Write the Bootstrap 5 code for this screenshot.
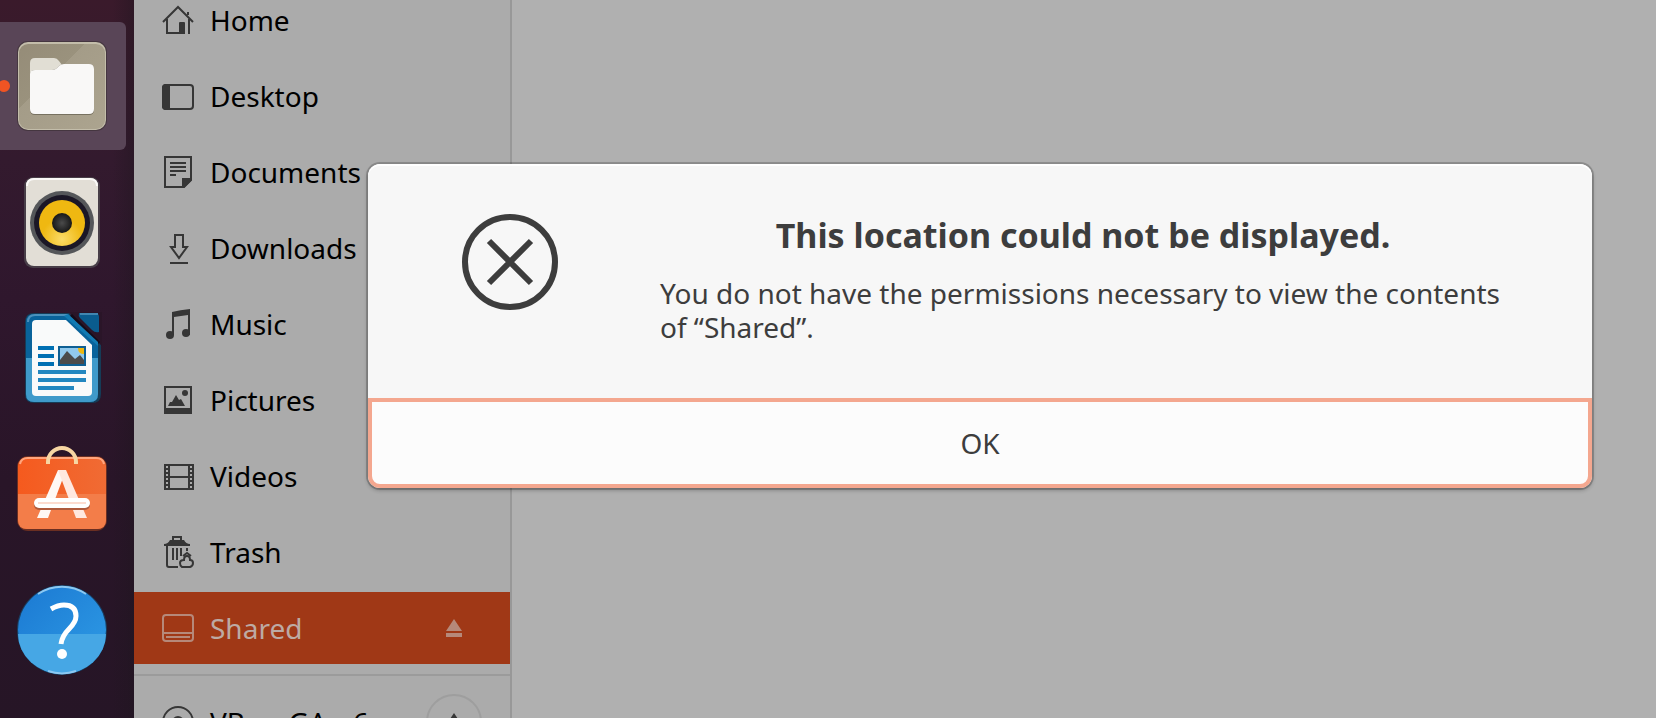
<!DOCTYPE html>
<html lang="en">
<head>
<meta charset="utf-8">
<meta name="viewport" content="width=device-width, initial-scale=1">
<title>Files</title>
<link href="https://cdn.jsdelivr.net/npm/bootstrap@5.3.0/dist/css/bootstrap.min.css" rel="stylesheet">
<style>
body { font-family: "Noto Sans", sans-serif; font-size: 28px; line-height: 34px; background: #b0b0b0; color: #000; }
.dock { width: 134px; padding: 22px 8px 0 0; background: linear-gradient(90deg, transparent 84%, rgba(30,22,30,.4)), linear-gradient(#3a1a2b 0, #331a2e 160px, #2f172d 300px, #291528 480px, #261526 100%); }
.dock-item { height: 128px; padding: 0 2px 0 0; border: 0; border-radius: 0 6px 6px 0; background: transparent; }
.dock-item.running { background: #594557; }
.running-dot { left: -2px; top: 58px; width: 12px; height: 12px; background: #f05423; }
.places { width: 378px; background: #ababab; border-right: 2px solid #989898; }
.place-list { margin-top: -16px; }
.place { height: 72px; padding: 0 28px; color: #000; }
.place svg { color: #363636; }
.place.current { background: #a03816; color: #bdaaa4; }
.place.current svg { color: #b6897a; }
.divider { height: 2px; margin: 6px 0; background: #9b9b9b; }
.eject { width: 56px; height: 56px; padding: 0; border: 0; background: transparent; }
.eject.ring { border: 2px solid #9e9e9e; }
.alert-window { left: 368px; right: 64px; top: 164px; background: #f7f7f7; border-radius: 12px; color: #3d3d3d; box-shadow: 0 0 0 2px rgba(0,0,0,.18), 0 2px 4px rgba(0,0,0,.3), inset 0 2px #fff; }
.alert-content { min-height: 234px; padding: 50px 86px 0 94px; gap: 102px; }
.alert-title { font-size: 34px; line-height: 42px; margin-bottom: 20px; }
.ok-button { height: 90px; background: #fcfcfc; border: 4px solid #f4a78f; border-radius: 0 0 12px 12px; color: #3d3d3d; }
</style>
</head>
<body class="overflow-hidden">
<div class="d-flex vh-100 position-relative overflow-hidden">
<nav class="dock d-flex flex-column gap-2 flex-shrink-0" aria-label="Dock">
<button class="dock-item running position-relative flex-shrink-0" aria-label="Files"><span class="running-dot position-absolute rounded-circle"></span>
<svg class="d-block mx-auto" width="96" height="96" viewBox="0 0 96 96"><defs><linearGradient id="fb" x2="1" y2="1"><stop stop-color="#958c78"/><stop offset=".38" stop-color="#9a927d"/><stop offset=".38" stop-color="#a49c88"/><stop offset="1" stop-color="#aca48f"/></linearGradient></defs><rect x="3" y="3" width="90" height="90" rx="11" fill="#3d3036" opacity=".7"/><rect x="4" y="4" width="88" height="88" rx="10" fill="#c3bdaa"/><rect x="5" y="6" width="86" height="85" rx="9" fill="url(#fb)"/><path d="M16 32v-7q0-5 5-5h19q3 0 5 3l3 4v5L40 35H16z" fill="#e1ded4"/><path d="M16 37q0-5 5-5h17q3 0 5-2l2-2q2-2 5-2h25q5 0 5 5v41q0 5-5 5H21q-5 0-5-5z" fill="#777160"/><path d="M16 36q0-4 5-4h17q3 0 5-2l2-2q2-2 5-2h25q5 0 5 5v40q0 5-5 5H21q-5 0-5-5z" fill="#f9f8f7"/></svg></button>
<button class="dock-item flex-shrink-0" aria-label="Rhythmbox">
<svg class="d-block mx-auto" width="96" height="96" viewBox="0 0 96 96"><defs><radialGradient id="cone" cy=".85"><stop stop-color="#fbdb67"/><stop offset=".9" stop-color="#efb811"/></radialGradient><radialGradient id="cap"><stop stop-color="#4b4b4b"/><stop offset="1" stop-color="#171717"/></radialGradient></defs><rect x="10" y="3" width="76" height="91" rx="9" fill="#483e48"/><rect x="12" y="4" width="72" height="88" rx="8" fill="#e2ded6"/><path d="M13 12q0-7 7-7h56q7 0 7 7" stroke="#faf9f7" stroke-width="2" fill="none"/><circle cx="48" cy="49" r="32" fill="#55575a"/><circle cx="48" cy="49" r="28" fill="#1b1726"/><circle cx="48" cy="49" r="23" fill="url(#cone)"/><circle cx="48" cy="49" r="10" fill="url(#cap)"/></svg></button>
<button class="dock-item flex-shrink-0" aria-label="LibreOffice Writer">
<svg class="d-block mx-auto" width="96" height="96" viewBox="0 0 96 96"><path d="M11 12q0-9 9-9h35l32 32v49q0 9-9 9H20q-9 0-9-9z" fill="#153c57"/><path d="M12 12q0-8 8-8h34l30 30v50q0 8-8 8H20q-8 0-8-8z" fill="#09639b"/><path d="M12 48h72v36q0 8-8 8H20q-8 0-8-8z" fill="#3f9aca"/><path d="M14 12q0-7 7-7h33" stroke="#4a91bc" stroke-width="2" fill="none"/><path d="M56 2h32v34z" fill="#2a1528"/><path d="M57 5l28 28" stroke="#150b18" stroke-width="3"/><path d="M65 3h16q4 0 4 4v15q-4 1-7-2L66 8q-2-2-1-5z" fill="#0a5c8e"/><path d="M66 4h18" stroke="#4186b0" stroke-width="2"/><path d="M54 4l30 28v4L50 6z" fill="#117bb3"/><path d="M18 14q0-4 4-4h30l26 25v47q0 4-4 4H22q-4 0-4-4z" fill="#f9fafa"/><path d="M24 38h16M24 46h16M24 54h16" stroke="#0070b3" stroke-width="4"/><path d="M24 62h48M24 70h48M24 78h36" stroke="#2387c0" stroke-width="4"/><path d="M44 36h28v20H44z" fill="#0e5f93"/><path d="M46 38h24v16H46z" fill="#91c9ed"/><path d="M64 38h6v6q-6 0-6-6z" fill="#eeb810"/><path d="M46 54V50l7-9 7 7 1 1 5-4 4 5v4z" fill="#4b4b4b"/></svg></button>
<button class="dock-item flex-shrink-0" aria-label="Ubuntu Software">
<svg class="d-block mx-auto" width="96" height="96" viewBox="0 0 96 96"><defs><linearGradient id="bag" x2="1"><stop stop-color="#f55a1e"/><stop offset="1" stop-color="#f06b34"/></linearGradient></defs><rect x="3" y="10" width="90" height="75" rx="11" fill="#6b2f22"/><rect x="4" y="11" width="88" height="72" rx="9" fill="url(#bag)"/><path d="M4 48h88v26q0 9-9 9H13q-9 0-9-9z" fill="#f37d49"/><path d="M6 18q1-6 8-6h68q7 0 8 6" fill="none" stroke="#ffa57d" stroke-width="2"/><path d="M34 18v-2a14 14 0 0 1 28 0v2" fill="none" stroke="#f7d6a3" stroke-width="4"/><path d="M44 24h8L34 72H23z" fill="#fff8f4"/><path d="M44 24h8l21 48H62z" fill="#ffe8df"/><rect x="20" y="53" width="56" height="11" rx="5" fill="#ae5a3d"/><rect x="20" y="52" width="56" height="10" rx="5" fill="#fff"/><path d="M24 57h48" stroke="#fcdcd0" stroke-width="2"/></svg></button>
<button class="dock-item flex-shrink-0" aria-label="Help">
<svg class="d-block mx-auto" width="96" height="96" viewBox="0 0 96 96"><defs><linearGradient id="help" x2="1" y2="1"><stop stop-color="#1b79d2"/><stop offset="1" stop-color="#2f9ce6"/></linearGradient></defs><circle cx="48" cy="48" r="45" fill="#193e61"/><circle cx="48" cy="48" r="44" fill="url(#help)"/><path d="M4 52h88a44 40 0 0 1-88 0z" fill="#46a7e5"/><path d="M24 12a43 43 0 0 1 48 0M34 89a43 43 0 0 0 28 0" fill="none" stroke="#8cc9f2" stroke-width="2"/><path d="M37 28q7-4 13-4 12 0 12 11 0 6-7 13t-8 15" transform="translate(0 -1)" fill="none" stroke="#fff" stroke-width="5"/><circle cx="48" cy="72" r="5" fill="#fff"/></svg></button>
</nav>

<aside class="places flex-shrink-0">
<div class="place-list d-flex flex-column gap-1">
<a href="#" class="place d-flex align-items-center gap-3 text-decoration-none"><svg width="32" height="32" viewBox="0 0 32 32" fill="none" stroke="currentColor" stroke-width="2"><path d="M1 18L16 3l15 15M5 15v14h17M27 15v15M26 8v3"/><path d="M17 19q0-1 1-1h4q1 0 1 1v11h-6z" fill="currentColor" stroke="none"/></svg>Home</a>
<a href="#" class="place d-flex align-items-center gap-3 text-decoration-none"><svg width="32" height="32" viewBox="0 0 32 32"><rect x="1" y="5" width="30" height="24" rx="3" fill="none" stroke="currentColor" stroke-width="2"/><path d="M0 8q0-4 4-4h4v26H4q-4 0-4-4z" fill="currentColor"/></svg>Desktop</a>
<a href="#" class="place d-flex align-items-center gap-3 text-decoration-none"><svg width="32" height="32" viewBox="0 0 32 32" fill="none" stroke="currentColor" stroke-width="2"><path d="M3 1h26v23l-7 7H3zM8 7h16M8 11h16M8 15h16M8 19h6"/><path d="M20 22h10v2l-8 8h-2z" fill="currentColor" stroke="none"/></svg>Documents</a>
<a href="#" class="place d-flex align-items-center gap-3 text-decoration-none"><svg width="32" height="32" viewBox="0 0 32 32" fill="none" stroke="currentColor" stroke-width="2"><path d="M13 3h8v12h4l-8 11-8-11h4zM8 31h18"/></svg>Downloads</a>
<a href="#" class="place d-flex align-items-center gap-3 text-decoration-none"><svg width="32" height="32" viewBox="0 0 32 32" fill="currentColor"><path d="M10 4q8-2 18-3v26h-2V7L12 9v18h-2z"/><circle cx="8" cy="27" r="4"/><circle cx="24" cy="25" r="4"/></svg>Music</a>
<a href="#" class="place d-flex align-items-center gap-3 text-decoration-none"><svg width="32" height="32" viewBox="0 0 32 32" fill="currentColor"><path d="M2 2h28v28H2zm2 2v20h24V4z" fill-rule="evenodd"/><path d="M6 22l2-4h2l4-7 3 5 2-1 4 7z"/><circle cx="23" cy="9" r="3"/></svg>Pictures</a>
<a href="#" class="place d-flex align-items-center gap-3 text-decoration-none"><svg width="32" height="32" viewBox="0 0 32 32" fill="none" stroke="currentColor" stroke-width="2"><path d="M7 5h20v24H7zM7 17h20M3 4v26M31 4v26"/><path d="M5 4v26M29 4v26" stroke-dasharray="2 2"/></svg>Videos</a>
<a href="#" class="place d-flex align-items-center gap-3 text-decoration-none"><svg width="32" height="32" viewBox="0 0 32 32" fill="none" stroke="currentColor" stroke-width="2"><path d="M11 4V1h8v3M5 10v19q0 2 2 2h9M11 12v12M15 12v12M19 12v8M25 12v3M21 20l4-3 4 3"/><path d="M2 10V8q4 0 6-4h14q2 4 6 4v2z" fill="currentColor" stroke="none"/><path d="M20 31q-2-1-2-4t4-3q0-4 3-4 3 0 3 4 3 0 3 3t-3 4z"/></svg>Trash</a>
<div class="place current d-flex align-items-center"><a href="#" class="d-flex align-items-center gap-3 text-decoration-none text-reset flex-grow-1"><svg width="32" height="32" viewBox="0 0 32 32" fill="none" stroke="currentColor" stroke-width="2"><rect x="1" y="3" width="30" height="26" rx="3"/><path d="M1 21h30M4 25h24"/></svg>Shared</a><button class="eject d-flex align-items-center justify-content-center flex-shrink-0" aria-label="Eject Shared"><svg width="16" height="20" viewBox="0 0 16 20" fill="currentColor"><path d="M8 1l8 12H0zM0 15h16v4H0z"/></svg></button></div>
<div class="divider"></div>
<div class="place d-flex align-items-center"><a href="#" class="d-flex align-items-center gap-3 text-decoration-none text-reset flex-grow-1"><svg width="32" height="32" viewBox="0 0 32 32" fill="none" stroke="currentColor" stroke-width="2"><circle cx="16" cy="16" r="15"/><circle cx="16" cy="16" r="5"/></svg>VBox_GAs_6.</a><button class="eject ring rounded-circle d-flex align-items-center justify-content-center flex-shrink-0" aria-label="Eject VBox_GAs_6."><svg width="16" height="20" viewBox="0 0 16 20" fill="currentColor"><path d="M8 1l8 12H0zM0 15h16v4H0z"/></svg></button></div>
</div>
</aside>
<main class="flex-grow-1"></main>

<section class="alert-window position-absolute" role="alertdialog" aria-labelledby="alert-title">
<div class="alert-content d-flex align-items-start">
<svg class="flex-shrink-0" width="96" height="96" viewBox="0 0 96 96" fill="none" stroke="#3d3d3d" stroke-width="6"><circle cx="48" cy="48" r="45"/><path d="M27 27l42 42M69 27L27 69"/></svg>
<div class="flex-grow-1">
<h1 id="alert-title" class="alert-title fw-bold text-center">This location could not be displayed.</h1>
<p class="mb-0">You do not have the permissions necessary to view the contents<br>of “Shared”.</p>
</div>
</div>
<button class="ok-button d-block w-100">OK</button>
</section>
</div>
<script src="https://cdn.jsdelivr.net/npm/bootstrap@5.3.0/dist/js/bootstrap.bundle.min.js"></script>
</body>
</html>
